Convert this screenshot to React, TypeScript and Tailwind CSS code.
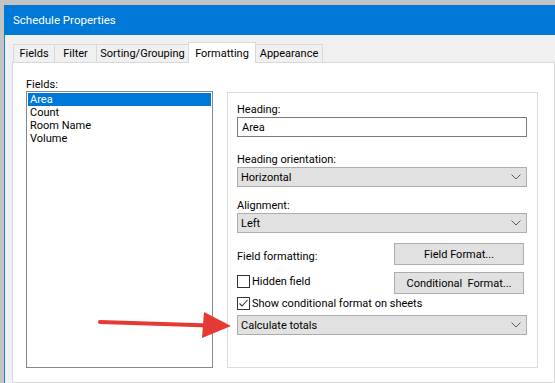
import React from 'react'

const font = { fontFamily: 'Roboto, "Noto Sans", sans-serif' }

function Chevron() {
  return (
    <svg width="10" height="6" viewBox="0 0 10 6" className="shrink-0">
      <path d="M0.5 0.5 L5 5 L9.5 0.5" fill="none" stroke="#5a5a5a" strokeWidth="1" />
    </svg>
  )
}

function Dropdown({ value }: { value: string }) {
  return (
    <div className="h-[20px] w-[290px] bg-[#e1e1e1] border border-[#adadad] flex items-center justify-between pl-[3px] pr-[5px]">
      <span>{value}</span>
      <Chevron />
    </div>
  )
}

function Checkbox({ checked, label }: { checked?: boolean; label: string }) {
  return (
    <div className="flex items-center gap-[2px]">
      <div className="w-[13px] h-[13px] border border-[#333] bg-white flex items-center justify-center">
        {checked && (
          <svg width="11" height="11" viewBox="0 0 11 11">
            <path d="M1.5 5.5 L4 8 L9.5 2" fill="none" stroke="#333" strokeWidth="1.1" />
          </svg>
        )}
      </div>
      <span>{label}</span>
    </div>
  )
}

const tabs = [
  { label: 'Fields', w: 'w-[42px]' },
  { label: 'Filter', w: 'w-[43px]' },
  { label: 'Sorting/Grouping', w: 'w-[93px]' },
  { label: 'Formatting', w: 'w-[68px]' },
  { label: 'Appearance', w: 'w-[68px]' },
]
const fields = ['Area', 'Count', 'Room Name', 'Volume']

export default function App() {
  return (
    <div
      className="relative w-[555px] h-[383px] overflow-hidden bg-[#c4c4c4] pt-[5px] pl-[4px] flex flex-col text-[11px] leading-[13px] text-black"
      style={font}
    >
      {/* Title bar */}
      <div className="h-[30px] bg-[#0078d7] text-white flex items-center pl-[9px] text-[11.5px] shrink-0">
        Schedule Properties
      </div>

      {/* Body */}
      <div className="flex-1 bg-[#f0f0f0] border-l border-[#1a80d9] pl-[7px] pt-[8px] flex flex-col">
        {/* Tabs */}
        <div className="flex items-end h-[19px] pl-[1px] relative z-10">
          {tabs.map(({ label, w }) => {
            const active = label === 'Formatting'
            return active ? (
              <div
                key={label}
                className={w + ' h-[21px] -mb-[1px] bg-white border border-b-0 border-[#d9d9d9] flex items-center justify-center -ml-px'}
              >
                {label}
              </div>
            ) : (
              <div
                key={label}
                className={w + ' h-[18px] border border-b-0 border-[#d9d9d9] flex items-center justify-center -ml-px first:ml-0'}
              >
                {label}
              </div>
            )
          })}
        </div>

        {/* Tab panel */}
        <div className="flex-1 bg-white border border-[#d9d9d9] flex pl-[13px] pt-[15px] gap-[14px]">
          {/* Fields list */}
          <div className="flex flex-col w-[187px] shrink-0">
            <div className="h-[13px]">Fields:</div>
            <div className="h-[277px] border border-[#828790] p-px flex flex-col">
              {fields.map((f, i) => (
                <div
                  key={f}
                  className={
                    'h-[13px] leading-[13px] pl-[2px] ' + (i === 0 ? 'bg-[#0078d7] text-white' : '')
                  }
                >
                  {f}
                </div>
              ))}
            </div>
          </div>

          {/* Group box */}
          <div className="mt-[14px] w-[311px] h-[276px] border border-[#dcdcdc] pl-[9px] pt-[10px] flex flex-col">
            <div className="h-[14px]">Heading:</div>
            <div className="h-[20px] w-[290px] border border-[#7a7a7a] flex items-center pl-[4px]">Area</div>

            <div className="h-[14px] mt-[16px]">Heading orientation:</div>
            <Dropdown value="Horizontal" />

            <div className="h-[14px] mt-[12px]">Alignment:</div>
            <Dropdown value="Left" />

            <div className="mt-[10px] flex w-[290px] justify-between">
              <div className="flex flex-col">
                <div className="h-[22px] flex items-center pt-[4px]">Field formatting:</div>
                <div className="mt-[10px]">
                  <Checkbox label="Hidden field" />
                </div>
              </div>
              <div className="flex flex-col gap-[7px] mr-[3px]">
                <div className="w-[130px] h-[22px] bg-[#e1e1e1] border border-[#adadad] flex items-center justify-center">
                  Field Format...
                </div>
                <div className="w-[130px] h-[22px] bg-[#e1e1e1] border border-[#adadad] flex items-center justify-center">
                  Conditional&nbsp; Format...
                </div>
              </div>
            </div>

            <div className="mt-[3px]">
              <Checkbox checked label="Show conditional format on sheets" />
            </div>
            <div className="mt-[5px]">
              <Dropdown value="Calculate totals" />
            </div>
          </div>
        </div>
      </div>

      {/* Red annotation arrow */}
      <svg className="absolute left-0 top-0 pointer-events-none" width="555" height="383" viewBox="0 0 555 383">
        <path d="M100 322 L210 325.5" stroke="#e53a33" strokeWidth="4" strokeLinecap="round" fill="none" />
        <path d="M204 312 L231 326 L202 338 Z" fill="#e53a33" />
      </svg>
    </div>
  )
}
